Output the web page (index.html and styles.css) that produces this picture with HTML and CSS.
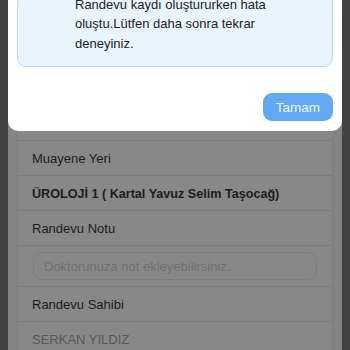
FILE: index.html
```html
<!DOCTYPE html>
<html>
<head>
<meta charset="utf-8">
<link rel="stylesheet" href="styles.css">
</head>
<body>
<div class="page">
  <div class="card">
    <div class="row spacer"></div>
    <div class="row">Muayene Yeri</div>
    <div class="row bold">ÜROLOJİ 1 ( Kartal Yavuz Selim Taşocağ)</div>
    <div class="row">Randevu Notu</div>
    <div class="row inputrow"><div class="input">Doktorunuza not ekleyebilirsiniz.</div></div>
    <div class="row">Randevu Sahibi</div>
    <div class="row muted">SERKAN YILDIZ</div>
  </div>
</div>
<div class="modal">
  <div class="info">
    <p>Randevu kaydı oluştururken hata oluştu.Lütfen daha sonra tekrar deneyiniz.</p>
  </div>
  <div class="actions"><button class="btn">Tamam</button></div>
</div>
</body>
</html>
```
FILE: styles.css
```css
html, body { margin: 0; padding: 0; }
body {
  background: #434343;
  font-family: "Liberation Sans", Arial, sans-serif;
  width: 350px;
  height: 350px;
  overflow: hidden;
  position: relative;
}
.page {
  margin: 0 8px;
  height: 350px;
  background: #848484;
  padding: 0 9px;
  box-sizing: border-box;
}
.card {
  background: #888888;
  border-left: 1px solid #7e7e7e;
  border-right: 1px solid #7e7e7e;
  padding-top: 131px;
}
.row {
  height: 34px;
  border-top: 1px solid #7c7c7c;
  display: flex;
  align-items: center;
  padding-left: 14px;
  font-size: 13px;
  color: #1c1c1c;
}
.row.spacer { height: 9px; border-top: none; }
.row.bold { font-weight: bold; font-size: 12.6px; padding-top: 1px; height: 33px; }
.row.inputrow { height: 40px; padding: 0 15px 0 15px; }
.input {
  flex: 1;
  height: 26px;
  border: 1px solid #7e7e7e;
  border-radius: 9px;
  display: flex;
  align-items: center;
  padding-left: 10px;
  color: #707070;
  font-size: 13px;
}
.row.muted { color: #575757; }
.modal {
  position: absolute;
  left: 8px;
  right: 8px;
  top: 0;
  height: 131px;
  background: #fff;
  border-radius: 0 0 10px 10px;
  display: flex;
  flex-direction: column;
  justify-content: flex-end;
  padding: 0 9px 10px;
  box-sizing: border-box;
}
.info {
  background: #e9f5fe;
  border: 1px solid #b9daf2;
  border-radius: 9px;
  padding: 0 20px 13px 57px;
  margin-top: -30px;
}
.info p {
  margin: 0;
  font-size: 13px;
  line-height: 19.5px;
  color: #222;
}
.actions {
  display: flex;
  justify-content: flex-end;
  margin-top: 26px;
}
.btn {
  width: 70px;
  height: 28px;
  border: none;
  border-radius: 9px;
  background: #62a9f6;
  color: #f2f8ff;
  font-family: "Liberation Sans", Arial, sans-serif;
  font-size: 13.5px;
  padding: 0;
}
```
